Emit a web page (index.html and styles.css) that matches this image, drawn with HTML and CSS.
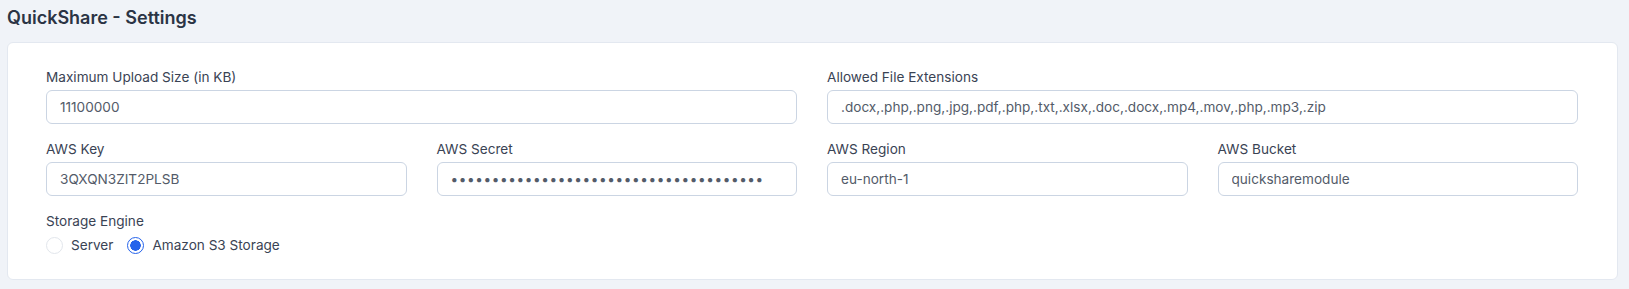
FILE: index.html
```html
<!DOCTYPE html>
<html lang="en">
<head>
    <meta charset="UTF-8">
    <meta name="viewport" content="width=device-width, initial-scale=1.0">
    <title>QuickShare - Settings</title>
    <link rel="stylesheet" href="styles.css">
</head>
<body>
    <h1 class="page-title">QuickShare - Settings</h1>

    <div class="card">
        <div class="settings-grid">
            <div class="form-group span-2">
                <label for="max-size">Maximum Upload Size (in KB)</label>
                <input type="text" id="max-size" value="11100000">
            </div>
            <div class="form-group span-2">
                <label for="extensions">Allowed File Extensions</label>
                <input type="text" id="extensions" value=".docx,.php,.png,.jpg,.pdf,.php,.txt,.xlsx,.doc,.docx,.mp4,.mov,.php,.mp3,.zip">
            </div>

            <div class="form-group">
                <label for="aws-key">AWS Key</label>
                <input type="text" id="aws-key" value="3QXQN3ZIT2PLSB">
            </div>
            <div class="form-group">
                <label for="aws-secret">AWS Secret</label>
                <input type="password" id="aws-secret" value="aaaaaaaaaaaaaaaaaaaaaaaaaaaaaaaaaaaaaa">
            </div>
            <div class="form-group">
                <label for="aws-region">AWS Region</label>
                <input type="text" id="aws-region" value="eu-north-1">
            </div>
            <div class="form-group">
                <label for="aws-bucket">AWS Bucket</label>
                <input type="text" id="aws-bucket" value="quicksharemodule">
            </div>

            <div class="form-group span-4">
                <label>Storage Engine</label>
                <div class="radio-row">
                    <label class="radio"><input type="radio" name="engine" value="server"> Server</label>
                    <label class="radio"><input type="radio" name="engine" value="s3" checked> Amazon S3 Storage</label>
                </div>
            </div>
        </div>
    </div>
</body>
</html>
```

FILE: styles.css
```css
body {
    font-family: Inter, "Noto Sans", sans-serif;
    background: #f0f3f8;
    color: #374151;
    margin: 0;
    padding: 0 11px 0 7px;
}

.page-title {
    font-size: 18px;
    font-weight: 600;
    color: #2b3445;
    margin: 0;
    padding: 7px 0 13px;
    line-height: 22px;
}

.card {
    background: white;
    border: 1px solid #e3e8f0;
    border-radius: 6px;
    padding: 24px 39px 24px 38px;
}

.settings-grid {
    display: grid;
    grid-template-columns: repeat(4, 1fr);
    column-gap: 30px;
    row-gap: 15px;
}

.span-2 {
    grid-column: span 2;
}

.span-4 {
    grid-column: span 4;
}

.form-group label {
    display: block;
    font-size: 13.6px;
    line-height: 20px;
    color: #3a4354;
    margin-bottom: 3px;
}

.form-group input[type="text"],
.form-group input[type="password"] {
    display: block;
    width: 100%;
    box-sizing: border-box;
    height: 34px;
    padding: 6px 13px;
    font-family: Inter, "Noto Sans", sans-serif;
    font-size: 13.6px;
    color: #535b69;
    border: 1px solid #cbd5e3;
    border-radius: 6px;
    background: white;
}

.form-group input[type="password"] {
    letter-spacing: 0.6px;
    padding-left: 13px;
}

.radio-row {
    display: flex;
    gap: 14px;
    margin-top: 4px;
}

.form-group .radio {
    display: flex;
    align-items: center;
    gap: 8px;
    margin: 0;
    color: #3a4354;
}

.radio input {
    appearance: none;
    width: 17px;
    height: 17px;
    margin: 0;
    border: 1px solid #e2e6ec;
    border-radius: 50%;
    background: white;
}

.radio input:checked {
    border: 1.5px solid #2563eb;
    background: radial-gradient(circle, #2563eb 0 5px, white 5.5px);
}
```
